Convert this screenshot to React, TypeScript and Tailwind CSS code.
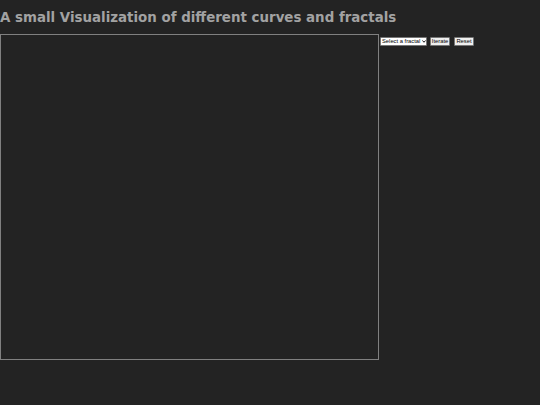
import React from "react";

export default function App() {
  return (
    <div className="min-h-[405px] w-full bg-[#232323]" style={{ fontFamily: '"DejaVu Sans", sans-serif' }}>
      <h1 className="m-0 pt-[10px] pb-[8px] text-[13.4px] leading-[16px] font-bold text-[#a2a2a2]" style={{ fontFamily: '"DejaVu Sans", sans-serif' }}>
        A small Visualization of different curves and fractals
      </h1>
      <div className="flex items-start">
        <div className="w-[379px] h-[326px] border border-[#808080] shrink-0" />
        <div className="flex items-start ml-[1px] mt-[3px] h-[9px] leading-[7px] text-[5.8px]" style={{ fontFamily: '"Liberation Sans", Arial, sans-serif' }}>
          <div className="relative flex h-[9px]">
            <select
              className="block appearance-none w-[47px] h-[9px] bg-white border border-[#767676] rounded-[1px] text-[5.8px] leading-[7px] text-black pl-[1px] pr-[5px] py-0 outline-none"
              defaultValue=""
            >
              <option value="">Select a fractal</option>
            </select>
            <svg className="absolute right-[1.5px] top-[3px] w-[4px] h-[3px] pointer-events-none" viewBox="0 0 8 6">
              <path d="M1 1 L4 4.5 L7 1" stroke="#000" strokeWidth="1.8" fill="none" />
            </svg>
          </div>
          <button className="ml-[3px] w-[20px] h-[9px] bg-[#efefef] border border-[#767676] rounded-[1px] text-[5.8px] leading-[7px] text-black p-0 flex items-center justify-center">
            Iterate
          </button>
          <button className="ml-[4px] w-[20px] h-[9px] bg-[#efefef] border border-[#767676] rounded-[1px] text-[5.8px] leading-[7px] text-black p-0 flex items-center justify-center">
            Reset
          </button>
        </div>
      </div>
    </div>
  );
}
